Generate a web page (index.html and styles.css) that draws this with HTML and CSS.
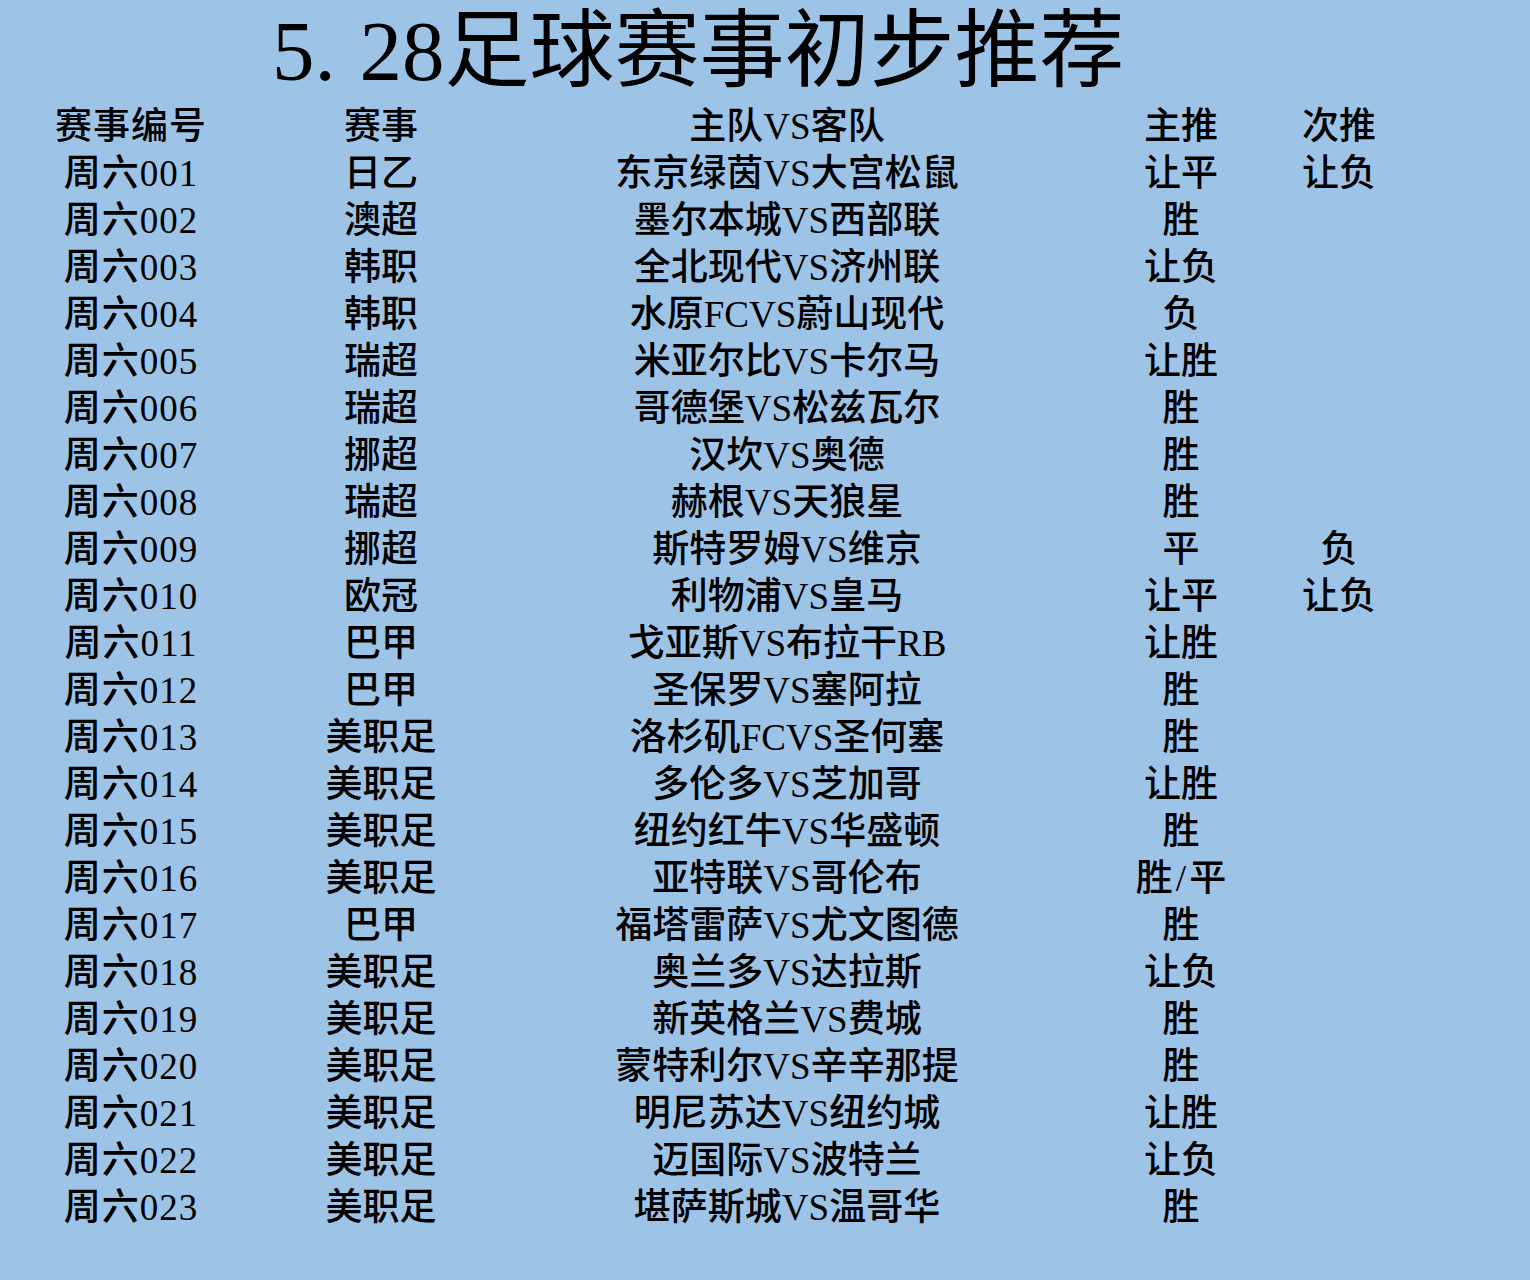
FILE: index.html
```html
<!DOCTYPE html>
<html lang="zh-CN">
<head>
<meta charset="utf-8">
<title>5.28足球赛事初步推荐</title>
<link rel="stylesheet" href="styles.css">
</head>
<body>
<div class="page">
  <h1 class="title">5<span class="dot">.</span>28足球赛事初步推荐</h1>
  <div class="table">
    <div class="row head"><span>赛事编号</span><span>赛事</span><span>主队VS客队</span><span>主推</span><span>次推</span></div>
    <div class="row"><span>周六001</span><span>日乙</span><span>东京绿茵VS大宫松鼠</span><span>让平</span><span>让负</span></div>
    <div class="row"><span>周六002</span><span>澳超</span><span>墨尔本城VS西部联</span><span>胜</span><span></span></div>
    <div class="row"><span>周六003</span><span>韩职</span><span>全北现代VS济州联</span><span>让负</span><span></span></div>
    <div class="row"><span>周六004</span><span>韩职</span><span>水原FCVS蔚山现代</span><span>负</span><span></span></div>
    <div class="row"><span>周六005</span><span>瑞超</span><span>米亚尔比VS卡尔马</span><span>让胜</span><span></span></div>
    <div class="row"><span>周六006</span><span>瑞超</span><span>哥德堡VS松兹瓦尔</span><span>胜</span><span></span></div>
    <div class="row"><span>周六007</span><span>挪超</span><span>汉坎VS奥德</span><span>胜</span><span></span></div>
    <div class="row"><span>周六008</span><span>瑞超</span><span>赫根VS天狼星</span><span>胜</span><span></span></div>
    <div class="row"><span>周六009</span><span>挪超</span><span>斯特罗姆VS维京</span><span>平</span><span>负</span></div>
    <div class="row"><span>周六010</span><span>欧冠</span><span>利物浦VS皇马</span><span>让平</span><span>让负</span></div>
    <div class="row"><span>周六011</span><span>巴甲</span><span>戈亚斯VS布拉干RB</span><span>让胜</span><span></span></div>
    <div class="row"><span>周六012</span><span>巴甲</span><span>圣保罗VS塞阿拉</span><span>胜</span><span></span></div>
    <div class="row"><span>周六013</span><span>美职足</span><span>洛杉矶FCVS圣何塞</span><span>胜</span><span></span></div>
    <div class="row"><span>周六014</span><span>美职足</span><span>多伦多VS芝加哥</span><span>让胜</span><span></span></div>
    <div class="row"><span>周六015</span><span>美职足</span><span>纽约红牛VS华盛顿</span><span>胜</span><span></span></div>
    <div class="row"><span>周六016</span><span>美职足</span><span>亚特联VS哥伦布</span><span>胜<i class="slash">/</i>平</span><span></span></div>
    <div class="row"><span>周六017</span><span>巴甲</span><span>福塔雷萨VS尤文图德</span><span>胜</span><span></span></div>
    <div class="row"><span>周六018</span><span>美职足</span><span>奥兰多VS达拉斯</span><span>让负</span><span></span></div>
    <div class="row"><span>周六019</span><span>美职足</span><span>新英格兰VS费城</span><span>胜</span><span></span></div>
    <div class="row"><span>周六020</span><span>美职足</span><span>蒙特利尔VS辛辛那提</span><span>胜</span><span></span></div>
    <div class="row"><span>周六021</span><span>美职足</span><span>明尼苏达VS纽约城</span><span>让胜</span><span></span></div>
    <div class="row"><span>周六022</span><span>美职足</span><span>迈国际VS波特兰</span><span>让负</span><span></span></div>
    <div class="row"><span>周六023</span><span>美职足</span><span>堪萨斯城VS温哥华</span><span>胜</span><span></span></div>
  </div>
</div>
</body>
</html>
```
FILE: styles.css
```css
html, body {
  margin: 0;
  padding: 0;
  background: #9dc3e6;
}
.page {
  width: 1530px;
  height: 1280px;
  background: #9dc3e6;
  color: #000;
  font-family: "Liberation Serif", "Noto Sans CJK SC", serif;
}
.title {
  margin: 0;
  padding-left: 272px;
  height: 103px;
  line-height: 103px;
  font-size: 85px;
  font-weight: 400;
  white-space: nowrap;
}
.dot {
  letter-spacing: 0.28em;
}
.table {
  display: flex;
  flex-direction: column;
}
.row {
  display: grid;
  grid-template-columns: 262px 238px 574px 214px 102px;
  height: 47px;
  line-height: 47px;
  font-size: 37px;
  font-weight: 500;
  white-space: nowrap;
}
.row span {
  text-align: center;
}
.row span:first-child {
  letter-spacing: 1px;
}
.slash {
  font-style: normal;
  padding: 0 3px;
}
```
